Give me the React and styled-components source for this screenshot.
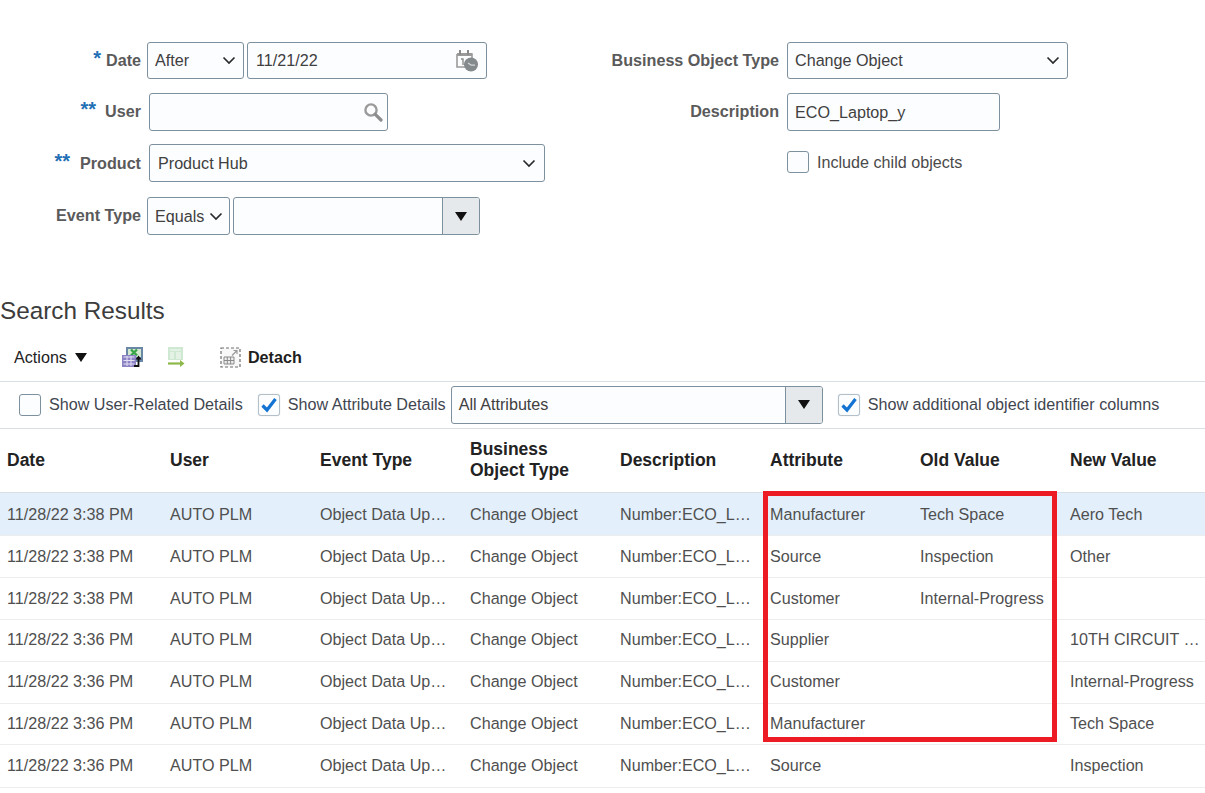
import React from 'react';
import styled, { createGlobalStyle } from 'styled-components';

const GlobalStyle = createGlobalStyle`
    html, body {
        margin: 0;
        padding: 0;
        background: white;
        overflow: hidden;
    }
    body {
        font-family: "Liberation Sans", Arial, sans-serif;
        font-size: 16.15px;
        color: #4a4a4a;
    }
`;

const Page = styled.div`
    position: relative;
    width: 1205px;
    height: 793px;
    overflow: hidden;
    box-sizing: border-box;
    padding-top: 42px;
`;

const SearchForm = styled.div`
    display: flex;
    height: 233px;
`;

const FormColumn = styled.div`
    width: ${({ width }) => width}px;
    display: flex;
    flex-direction: column;
`;

const FormRow = styled.div`
    display: flex;
    align-items: flex-start;
    height: ${({ height }) => height}px;
`;

const Label = styled.div`
    width: ${({ width }) => width}px;
    height: 36px;
    box-sizing: border-box;
    display: flex;
    align-items: center;
    justify-content: flex-end;
    font-weight: bold;
    color: #5a5a5a;
    padding-top: ${({ top }) => top || 0}px;
    margin-right: ${({ gap }) => gap}px;
    white-space: nowrap;
`;

const Required = styled.span`
    color: #1f6fb5;
    font-size: 20px;
    line-height: 16px;
    margin-right: ${({ gap }) => gap}px;
    position: relative;
    top: -3px;
`;

const Field = styled.div`
    width: ${({ width }) => width}px;
    height: ${({ height }) => height || 38}px;
    box-sizing: border-box;
    border: 1px solid #7c909e;
    border-radius: 3px;
    background: #fcfdff;
    display: flex;
    align-items: center;
    padding-left: ${({ pad }) => pad || 7}px;
    padding-right: ${({ padRight }) => padRight || 0}px;
    margin-right: ${({ gap }) => gap || 0}px;
    color: #404040;
    flex-shrink: 0;
    overflow: hidden;
`;

const FieldText = styled.span`
    flex: 1;
    white-space: nowrap;
`;

const DropButton = styled.div`
    width: 36px;
    height: 100%;
    border-left: 1px solid #7c909e;
    background: #e5e9eb;
    display: flex;
    align-items: center;
    justify-content: center;
    flex-shrink: 0;
`;

const Caret = styled.div`
    width: 0;
    height: 0;
    border-left: 6.5px solid transparent;
    border-right: 6.5px solid transparent;
    border-top: 9px solid #111;
    margin-left: ${({ left }) => left || 0}px;
`;

const CheckLine = styled.label`
    display: flex;
    align-items: center;
    color: ${({ dark }) => (dark ? '#3f4650' : '#4a4a4a')};
    white-space: nowrap;
`;

const CheckBox = styled.div`
    width: 22px;
    height: 22px;
    box-sizing: border-box;
    border: 1px solid #7c909e;
    border-radius: 3px;
    background: #fcfdff;
    margin-right: ${({ gap }) => gap}px;
    display: flex;
    align-items: center;
    justify-content: center;
    flex-shrink: 0;
    box-shadow: ${({ checked }) => (checked ? '0 0 1px #b8c4cc' : 'none')};
    border-color: ${({ checked }) => (checked ? '#b3c0c9' : '#7c909e')};
`;

const SectionTitle = styled.h2`
    margin: 0;
    height: 38px;
    padding-top: 22px;
    font-size: 24.3px;
    line-height: 28px;
    font-weight: normal;
    color: #3c3c3c;
    box-sizing: content-box;
`;

const Toolbar = styled.div`
    display: flex;
    align-items: center;
    height: 45px;
    box-sizing: border-box;
    padding-left: 14px;
    padding-bottom: 3px;
    margin-top: 1px;
`;

const ActionsButton = styled.div`
    display: flex;
    align-items: center;
    color: #222;
    margin-right: 34px;
`;

const ToolIcon = styled.div`
    display: flex;
    margin-right: ${({ gap }) => gap}px;
`;

const DetachText = styled.span`
    font-weight: bold;
    color: #1e1e1e;
`;

const FilterBar = styled.div`
    display: flex;
    align-items: center;
    height: 47px;
    box-sizing: border-box;
    padding-left: 19px;
    padding-bottom: 1px;
    border-top: 1px solid #d8dfe5;
`;

const Filter = styled.div`
    margin-right: ${({ gap }) => gap}px;
`;

const Table = styled.div`
    border-top: 1px solid #d8dfe5;
`;

const Row = styled.div`
    display: grid;
    grid-template-columns: 163px repeat(7, 150px);
    align-items: center;
    box-sizing: border-box;
    height: ${({ height }) => height}px;
    padding-bottom: ${({ lift }) => lift || 0}px;
    border-bottom: 1px solid ${({ head }) => (head ? '#d8dfe5' : '#ededed')};
    background: ${({ selected }) => (selected ? '#e3effb' : 'white')};
`;

const HeadCell = styled.div`
    font-weight: bold;
    font-size: 17.5px;
    color: #222;
    padding-left: 7px;
    padding-bottom: 1px;
    line-height: 21px;
`;

const Cell = styled.div`
    color: #4f4f4f;
    padding-left: 7px;
    padding-right: ${({ right }) => right || 15}px;
    white-space: nowrap;
    overflow: hidden;
    text-overflow: ellipsis;
`;

const Highlight = styled.div`
    position: absolute;
    left: 763px;
    top: 491px;
    width: 294px;
    height: 251px;
    box-sizing: border-box;
    border: 5px solid #ed1c24;
`;

const CalendarIcon = () => (
    <svg width="24" height="24" viewBox="0 0 24 24" style={{ display: 'block' }}>
        <path d="M2 5h15v5M2 5v13h8" fill="none" stroke="#9a9a9a" strokeWidth="1.6" />
        <path d="M2 4h15v3H2z" fill="#9a9a9a" />
        <path d="M5 1v5M13 1v5" stroke="#8a8a8a" strokeWidth="2" />
        <path d="M6 10h2v6" fill="none" stroke="#8a8a8a" strokeWidth="1.4" />
        <circle cx="16" cy="15.500" r="7" fill="#858a8d" />
        <path d="M13 14l3.200 2.200H20" fill="none" stroke="#d5d8da" strokeWidth="1.300" />
    </svg>
);

const SearchIcon = () => (
    <svg width="20" height="20" viewBox="0 0 20 20" style={{ display: 'block' }}>
        <circle cx="8" cy="8" r="5.600" fill="none" stroke="#9a9a9a" strokeWidth="2.400" />
        <path d="M12.300 12.300L18 18" stroke="#8d8d8d" strokeWidth="3.200" strokeLinecap="round" />
    </svg>
);

const ExportExcelIcon = () => (
    <svg width="23" height="22" viewBox="0 0 23 22" style={{ display: 'block' }}>
        <path d="M5 1h17v15H5z" fill="#6a87a8" />
        <path d="M7 3h13v8H7z" fill="#d3ead0" />
        <path d="M10 3.500l6 6M16 3.500l-6 6" stroke="#3aa548" strokeWidth="2.400" />
        <path d="M1 9h14v12H1z" fill="#8c83c4" />
        <path d="M2.500 11h11M2.500 14.500h11M2.500 18h11M6 10v10M10 10v10" stroke="#e4e1f4" strokeWidth="1" />
        <path d="M13 20h4.500v-7" fill="none" stroke="#111" strokeWidth="1.800" />
        <path d="M14.500 13.500l3-4 3 4z" fill="#111" />
    </svg>
);

const ExportDisabledIcon = () => (
    <svg width="18" height="22" viewBox="0 0 18 22" style={{ display: 'block' }}>
        <path d="M1 1h15v13H1z" fill="#cfe8d2" />
        <path d="M3 3h11v2H3zM3 6h4v7H3zM9 6h5v7H9z" fill="#e4f2e5" />
        <path d="M1 17.500h13" stroke="#8db84a" strokeWidth="2.200" />
        <path d="M13 14l4.500 3.500L13 21z" fill="#8db84a" />
    </svg>
);

const DetachIcon = () => (
    <svg width="21" height="21" viewBox="0 0 21 21" style={{ display: 'block' }}>
        <path d="M1 1h19v19H1z" fill="#f8f8f8" stroke="#6e6e6e" strokeWidth="1.200" strokeDasharray="3 2" />
        <path d="M4 10h10v7H4z" fill="#eee" stroke="#8a8a8a" strokeWidth="1" />
        <path d="M4 13.500h10M7.300 10v7M10.600 10v7" stroke="#8a8a8a" strokeWidth="1" />
        <path d="M12 8.500L17 3.500M13.500 3.500H17V7" fill="none" stroke="#9a9a9a" strokeWidth="1.200" />
    </svg>
);

const ChevronIcon = () => (
    <svg width="14" height="9" viewBox="0 0 14 9" style={{ display: 'block', flexShrink: 0 }}>
        <path d="M1.500 1.500L7 7l5.500-5.500" fill="none" stroke="#2b2b2b" strokeWidth="1.700" />
    </svg>
);

const CheckIcon = () => (
    <svg width="18" height="18" viewBox="0 0 18 18" style={{ display: 'block' }}>
        <path d="M2.500 9.500l4.500 4.500L15.500 3" fill="none" stroke="#1273d2" strokeWidth="3.200" />
    </svg>
);

const rows = [
    ['11/28/22 3:38 PM', 'Manufacturer', 'Tech Space', 'Aero Tech'],
    ['11/28/22 3:38 PM', 'Source', 'Inspection', 'Other'],
    ['11/28/22 3:38 PM', 'Customer', 'Internal-Progress', ''],
    ['11/28/22 3:36 PM', 'Supplier', '', '10TH CIRCUIT INDUSTRIES'],
    ['11/28/22 3:36 PM', 'Customer', '', 'Internal-Progress'],
    ['11/28/22 3:36 PM', 'Manufacturer', '', 'Tech Space'],
    ['11/28/22 3:36 PM', 'Source', '', 'Inspection'],
];

const rowHeights = [43, 42, 42, 42, 42, 41, 43];

const App = () => {
    return (
        <Page>
            <GlobalStyle />
            <SearchForm>
                <FormColumn width={560}>
                    <FormRow height={51}>
                        <Label width={141} gap={6} top={1}><Required gap={5}>*</Required>Date</Label>
                        <Field width={97} height={37} gap={3}>
                            <FieldText>After</FieldText>
                            <ChevronIcon />
                            <span style={{ width: 7 }} />
                        </Field>
                        <Field width={240} height={37} pad={8} padRight={7}>
                            <FieldText>11/21/22</FieldText>
                            <CalendarIcon />
                        </Field>
                    </FormRow>
                    <FormRow height={51}>
                        <Label width={141} gap={8} top={1}><Required gap={9}>**</Required>User</Label>
                        <Field width={239} padRight={4}>
                            <FieldText />
                            <SearchIcon />
                        </Field>
                    </FormRow>
                    <FormRow height={53}>
                        <Label width={141} gap={8} top={3}><Required gap={10}>**</Required>Product</Label>
                        <Field width={396} pad={8} padRight={8}>
                            <FieldText>Product Hub</FieldText>
                            <ChevronIcon />
                        </Field>
                    </FormRow>
                    <FormRow height={38}>
                        <Label width={141} gap={6} top={1}>Event Type</Label>
                        <Field width={83} gap={3}>
                            <FieldText>Equals</FieldText>
                            <ChevronIcon />
                            <span style={{ width: 6 }} />
                        </Field>
                        <Field width={247}>
                            <FieldText />
                            <DropButton><Caret /></DropButton>
                        </Field>
                    </FormRow>
                </FormColumn>
                <FormColumn width={645}>
                    <FormRow height={51}>
                        <Label width={219} gap={8} top={1}>Business Object Type</Label>
                        <Field width={281} height={37} pad={7} padRight={7}>
                            <FieldText>Change Object</FieldText>
                            <ChevronIcon />
                        </Field>
                    </FormRow>
                    <FormRow height={58}>
                        <Label width={219} gap={8} top={1}>Description</Label>
                        <Field width={213}>
                            <FieldText>ECO_Laptop_y</FieldText>
                        </Field>
                    </FormRow>
                    <FormRow height={30}>
                        <Label width={219} gap={8} />
                        <CheckLine>
                            <CheckBox gap={8} />
                            Include child objects
                        </CheckLine>
                    </FormRow>
                </FormColumn>
            </SearchForm>
            <SectionTitle>Search Results</SectionTitle>
            <Toolbar>
                <ActionsButton>Actions<Caret left={8} /></ActionsButton>
                <ToolIcon gap={23}><ExportExcelIcon /></ToolIcon>
                <ToolIcon gap={35}><ExportDisabledIcon /></ToolIcon>
                <ToolIcon gap={7}><DetachIcon /></ToolIcon>
                <DetachText>Detach</DetachText>
            </Toolbar>
            <FilterBar>
                <Filter gap={15}>
                    <CheckLine dark><CheckBox gap={8} />Show User-Related Details</CheckLine>
                </Filter>
                <Filter gap={5}>
                    <CheckLine dark><CheckBox gap={8} checked><CheckIcon /></CheckBox>Show Attribute Details</CheckLine>
                </Filter>
                <Filter gap={15}>
                    <Field width={372}>
                        <FieldText>All Attributes</FieldText>
                        <DropButton><Caret /></DropButton>
                    </Field>
                </Filter>
                <Filter gap={0}>
                    <CheckLine dark><CheckBox gap={8} checked><CheckIcon /></CheckBox>Show additional object identifier columns</CheckLine>
                </Filter>
            </FilterBar>
            <Table>
                <Row head height={64}>
                    <HeadCell>Date</HeadCell>
                    <HeadCell>User</HeadCell>
                    <HeadCell>Event Type</HeadCell>
                    <HeadCell>Business<br />Object Type</HeadCell>
                    <HeadCell>Description</HeadCell>
                    <HeadCell>Attribute</HeadCell>
                    <HeadCell>Old Value</HeadCell>
                    <HeadCell>New Value</HeadCell>
                </Row>
                {rows.map((row, i) => (
                    <Row key={i} height={rowHeights[i]} selected={i === 0} lift={i > 2 ? 2 : 0}>
                        <Cell>{row[0]}</Cell>
                        <Cell>AUTO PLM</Cell>
                        <Cell right={15}>Object Data Update</Cell>
                        <Cell>Change Object</Cell>
                        <Cell right={6}>Number:ECO_Laptop_y</Cell>
                        <Cell>{row[1]}</Cell>
                        <Cell right={6}>{row[2]}</Cell>
                        <Cell right={10}>{row[3]}</Cell>
                    </Row>
                ))}
            </Table>
            <Highlight />
        </Page>
    );
};

export default App;
